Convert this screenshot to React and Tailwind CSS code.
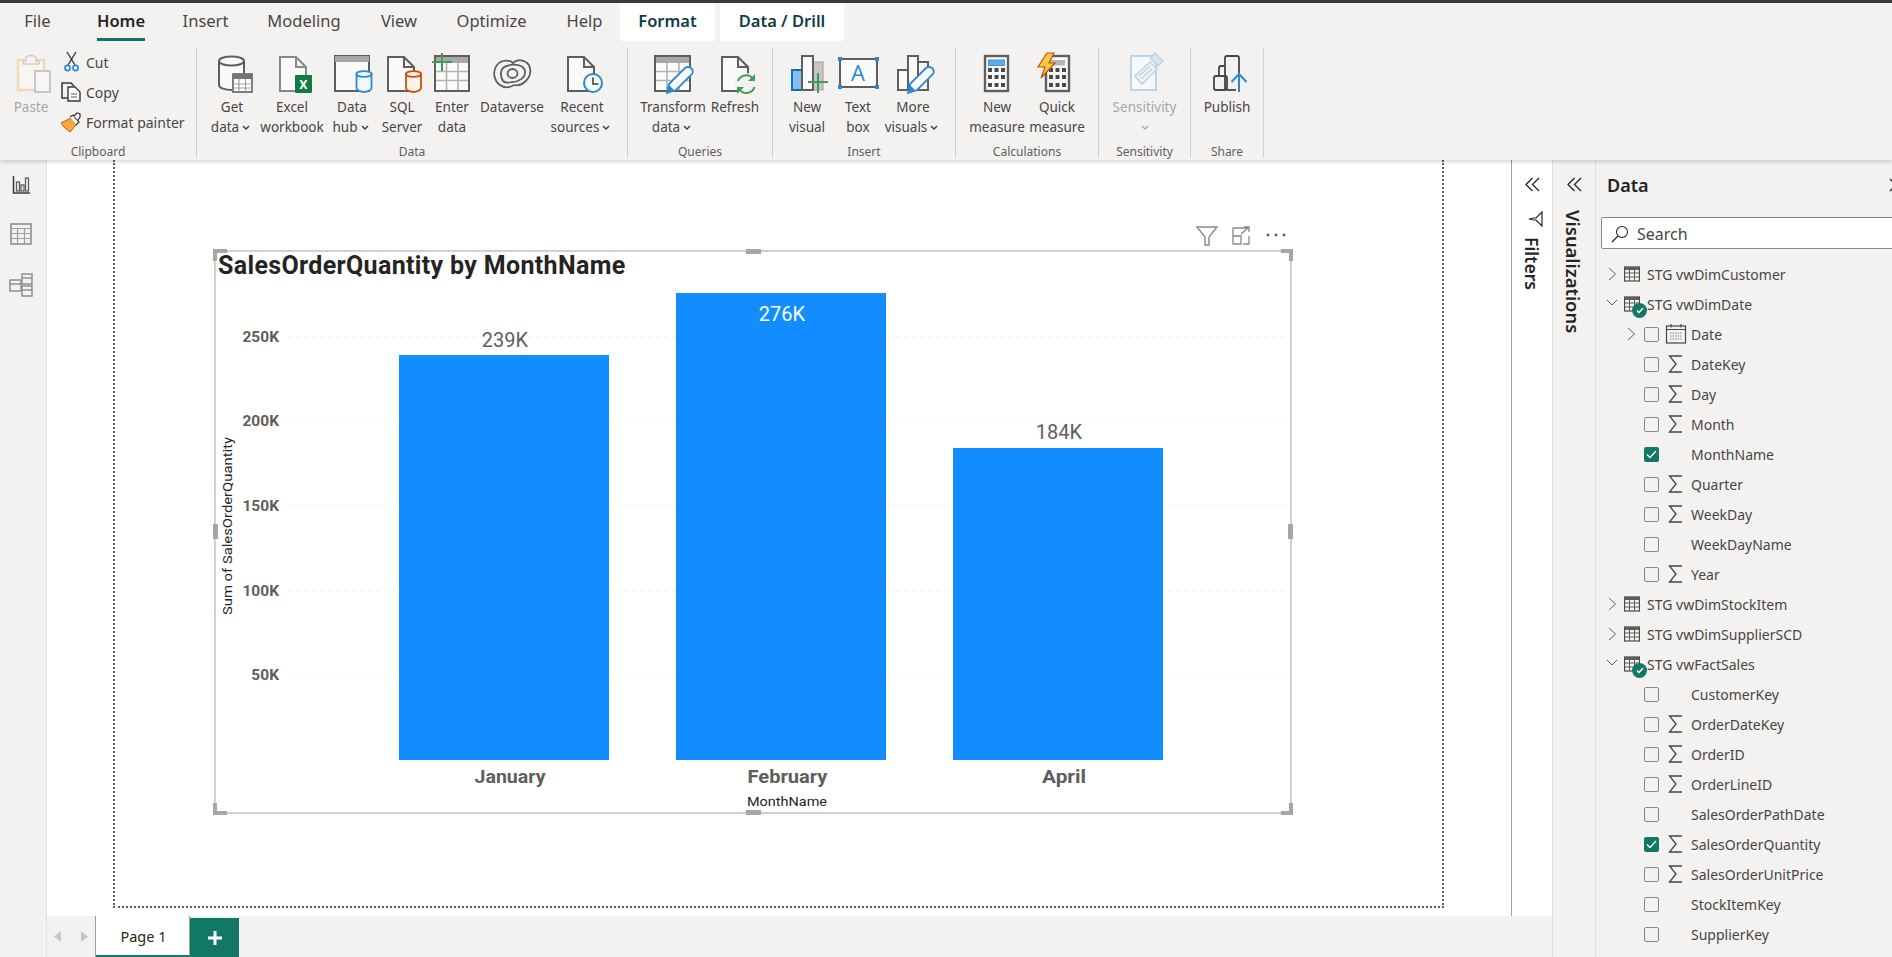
const GRAY = '#605e5c';
const BLUE = '#2b88d8';
const GREEN = '#3f9c57';

// icons below are drawn in page pixels: the viewBox is the spot they sit on
function Cylinder({ cx, color, fill }) {
    return (
        <g stroke={color} strokeWidth="1.8" fill={fill}>
            <path d={`M${cx - 7.5} 74 V88 C${cx - 7.5} 90.5 ${cx - 3} 92 ${cx} 92 C${cx + 3} 92 ${cx + 7.5} 90.5 ${cx + 7.5} 88 V74 Z`} />
            <ellipse cx={cx} cy="74" rx="7.5" ry="2.8" />
        </g>
    );
}

function Page({ x, stroke = GRAY }) {
    return (
        <path d={`M${x} 57 H${x + 16} L${x + 26} 67 V91 H${x} Z M${x + 16} 57 V67 H${x + 26}`} stroke={stroke} strokeWidth="2" fill="#fafafa" />
    );
}

function Pencil({ dx = 0 }) {
    return (
        <g transform={`translate(${dx} 0)`}>
            <path d="M667 93 L669 84 L685 68 Q688 66 691 68 Q694 71 692 74 L676 90 Z" stroke={BLUE} strokeWidth="1.8" fill="#fff" />
            <path d="M667 93 L669 85 L675 91 Z" fill={BLUE} />
        </g>
    );
}

function TableGrid({ x, w, cols, rows, withPlus }) {
    return (
        <g>
            <rect x={x} y="56" width={w} height="35" fill="#fafafa" />
            <rect x={x} y="56" width={w} height="7" fill="#a8a8a8" />
            {cols.map(c => <path key={c} d={`M${c} 63 V90`} stroke="#b5b3b1" strokeWidth="1.6" />)}
            {rows.map(r => <path key={r} d={`M${x} ${r} H${x + w}`} stroke="#b5b3b1" strokeWidth="1.6" />)}
            <rect x={x} y="56" width={w} height="35" fill="none" stroke={GRAY} strokeWidth="2" />
            {withPlus && <path d="M432 62 H452 M442 53 V71" stroke={GREEN} strokeWidth="2" />}
        </g>
    );
}

function CalcKeys({ xs }) {
    return (
        <g fill="#4a4846">
            {[70, 77, 85].map(y => xs.map(x => <rect key={`${x}-${y}`} x={x - 2} y={y - 2} width="4" height="4" />))}
        </g>
    );
}

const ICONS = {
    paste: (
        <g>
            <rect x="18" y="60" width="26" height="30" fill="#f8f6f3" stroke="#f2d8bb" strokeWidth="2.4" />
            <path d="M26 61 V57 Q31 54 36 57 V61 H39 V64 H23 V61 Z" fill="#f4f3f2" stroke="#cfcdcb" strokeWidth="1.4" />
            <rect x="35" y="71" width="15" height="21" fill="#f6f6f6" stroke="#c8c6c4" strokeWidth="2" />
        </g>
    ),
    getData: (
        <g>
            <path d="M219 61 V85 C219 88 225 90 232 90 V73 H244 V61 Z" fill="#fafafa" />
            <path d="M219 61 V85 C219 88 225 90 232 90 M244 61 V73" stroke={GRAY} strokeWidth="2" fill="none" />
            <ellipse cx="231.5" cy="61" rx="12.5" ry="4.6" fill="#fafafa" stroke={GRAY} strokeWidth="2" />
            <rect x="233" y="74" width="19" height="18" fill="#fff" stroke={GRAY} strokeWidth="1.6" />
            <rect x="233" y="74" width="19" height="5" fill="#767472" />
            <path d="M239 79 V92 M245.5 79 V92 M233 84 H252 M233 88 H252" stroke="#a19f9d" strokeWidth="1.2" />
        </g>
    ),
    excel: (
        <g>
            <Page x={280} stroke="#8a8886" />
            <rect x="295" y="75" width="17" height="18" rx="1" fill="#107c41" />
            <text x="303.5" y="89" textAnchor="middle" fill="#fff" fontSize="13" fontWeight="700" fontFamily="Roboto">X</text>
        </g>
    ),
    dataHub: (
        <g>
            <rect x="335" y="56" width="34" height="35" fill="#fafafa" stroke={GRAY} strokeWidth="2" />
            <rect x="335" y="56" width="34" height="6" fill="#a8a8a8" />
            <Cylinder cx={364} color={BLUE} fill="#f2f8fc" />
        </g>
    ),
    sql: (
        <g>
            <Page x={388} />
            <Cylinder cx={413.5} color="#ca5010" fill="#fdf3ea" />
        </g>
    ),
    enter: <TableGrid x={435} w={34} cols={[446.5, 458]} rows={[71.5, 80.5]} withPlus />,
    dataverse: (
        <g stroke={GRAY} strokeWidth="1.8" fill="none">
            <path d="M500 85 C494 81 492 71 497 65 C502 59 510 60 513 63 C518 58 528 60 530 68 C532 78 522 87 514 85 C509 88 504 88 500 85 Z" />
            <path d="M503 81 C499 74 501 67 507 66 C514 63 524 65 525 71 C526 78 518 82 512 82 C508 83 505 83 503 81 Z" />
            <ellipse cx="512.5" cy="73.5" rx="5" ry="4.5" />
        </g>
    ),
    recent: (
        <g>
            <Page x={568} />
            <circle cx="593" cy="83" r="9" fill="#f5fafd" stroke={BLUE} strokeWidth="2" />
            <path d="M593 77.5 V84 H598.5" stroke="#3b3a39" strokeWidth="1.6" fill="none" />
        </g>
    ),
    transform: (
        <g>
            <TableGrid x={655} w={35} cols={[667, 679]} rows={[71.5, 80.5]} />
            <Pencil />
        </g>
    ),
    refresh: (
        <g>
            <Page x={722} />
            <circle cx="746" cy="84" r="11" fill="#f3f2f1" />
            <path d="M738 81 A8.5 8.5 0 0 1 753 79 M754.5 87 A8.5 8.5 0 0 1 739.5 89.5" stroke={GREEN} strokeWidth="2" fill="none" />
            <path d="M755 74 V81 H748 Z M737 94 V87 H744 Z" fill={GREEN} />
        </g>
    ),
    newVisual: (
        <g>
            <rect x="813" y="62" width="10" height="28" fill="#c8c6c4" stroke="#a19f9d" strokeWidth="1" />
            <rect x="792" y="70" width="10" height="20" fill="#83beec" stroke="#106ebe" strokeWidth="2" />
            <rect x="802" y="56" width="11" height="34" fill="#fafafa" stroke={GRAY} strokeWidth="2" />
            <path d="M808 82 H828 M818 73 V93" stroke={GREEN} strokeWidth="2" />
        </g>
    ),
    textBox: (
        <g>
            <rect x="840" y="59" width="37" height="28" fill="#fafafa" stroke={GRAY} strokeWidth="2" />
            {[[838, 57], [875, 57], [838, 85], [875, 85]].map(([x, y]) => <rect key={x + '-' + y} x={x} y={y} width="4" height="4" fill={BLUE} />)}
            <text x="858" y="81" textAnchor="middle" fill={BLUE} fontSize="22" fontFamily="Open Sans">A</text>
        </g>
    ),
    moreVisuals: (
        <g>
            <path d="M918 62 H928 V90 H918 Z M898 70 H908 V90 H898 Z" fill="#fafafa" stroke={GRAY} strokeWidth="2" />
            <rect x="908" y="56" width="10" height="34" fill="#fafafa" stroke={GRAY} strokeWidth="2" />
            <Pencil dx={241} />
        </g>
    ),
    newMeasure: (
        <g>
            <rect x="985" y="56" width="23" height="35" fill="#fafafa" stroke={GRAY} strokeWidth="2.4" />
            <rect x="988.5" y="60" width="16" height="5.5" fill="#5ea9e6" stroke={BLUE} strokeWidth="0.8" />
            <CalcKeys xs={[990, 996.5, 1003]} />
        </g>
    ),
    quickMeasure: (
        <g>
            <rect x="1046" y="56" width="23" height="35" fill="#fafafa" stroke={GRAY} strokeWidth="2.4" />
            <rect x="1050" y="60" width="15" height="5.5" fill="#b5b3b1" />
            <CalcKeys xs={[1051, 1057.5, 1064]} />
            <path d="M1047 53 H1054 L1049 63 H1055 L1041 78 L1045 67 H1038 Z" fill="#ffc83d" stroke="#ca5010" strokeWidth="1.2" />
        </g>
    ),
    sensitivity: (
        <g>
            <rect x="1131" y="56" width="25" height="34" fill="#f6f8f9" stroke="#b9d6e9" strokeWidth="2" />
            <path d="M1135 76 L1150 62 L1157 69 L1142 84 Z" fill="#f3f2f1" stroke="#b9d6e9" strokeWidth="1.6" />
            <path d="M1139 76 L1150 66 M1141 79 L1152 69" stroke="#b9d6e9" strokeWidth="1.4" />
            <path d="M1150 58 L1155 53 L1163 61 L1158 66 Z" fill="#d3e6f2" stroke="#b9d6e9" strokeWidth="1.4" />
        </g>
    ),
    publish: (
        <g fill="none">
            <path d="M1219 76 V68 Q1219 66 1221 66 H1225 M1225 90 V58 Q1225 56 1227 56 H1237 Q1239 56 1239 58 V73" stroke="#484644" strokeWidth="1.8" />
            <rect x="1214" y="76" width="13" height="14" rx="2" stroke="#484644" strokeWidth="1.8" />
            <path d="M1227 90 H1236" stroke="#484644" strokeWidth="1.8" />
            <path d="M1239 92 V74 M1231.5 82 L1239 74 L1246.5 82" stroke={BLUE} strokeWidth="2" />
        </g>
    ),
};

function Caret({ color = '#3b3a39' }) {
    return (
        <svg width="8" height="5" viewBox="0 0 8 5" className="inline-block ml-[3px] mb-[1px]">
            <path d="M1 1 L4 4 L7 1" stroke={color} strokeWidth="1.4" fill="none" />
        </svg>
    );
}

// big ribbon button: x is the page position of its left edge
function RibbonButton({ x, w, icon, lines, caret, muted }) {
    return (
        <div className="flex flex-col items-center shrink-0" style={{ width: w }}>
            <svg width={w} height="42" viewBox={`${x} 55 ${w} 42`} className="overflow-visible shrink-0">{ICONS[icon]}</svg>
            <div className={`text-center leading-[20px] whitespace-nowrap text-[13.5px] ${muted ? 'text-[#a8a6a4]' : 'text-[#484644]'}`}>
                {lines.map((l, i) => (
                    <div key={i} className={caret && i === lines.length - 1 ? '-ml-[3px]' : ''}>{l}{caret && i === lines.length - 1 && <Caret />}</div>
                ))}
            </div>
        </div>
    );
}

function RibbonGroup({ width, pad, label, children }) {
    return (
        <div className="relative flex flex-col h-[110px] pt-[7px] border-r border-[#d2d0ce] shrink-0" style={{ width, paddingLeft: pad }}>
            <div className="flex flex-1">{children}</div>
            <div className="absolute left-0 right-0 bottom-[-2px] text-center text-[12px] leading-[16px] text-[#605e5c]">{label}</div>
        </div>
    );
}

function Ribbon() {
    return (
        <div className="relative z-10 h-[119px] pt-[7px] flex bg-[#f3f2f1] shadow-[0_2px_4px_rgba(0,0,0,0.16)] shrink-0">
            <RibbonGroup width={197} pad={12} label="Clipboard">
                <RibbonButton x={12} w={38} icon="paste" lines={['Paste']} muted />
                <div className="flex flex-col ml-[11px] mt-[-8px] text-[14px] text-[#484644]">
                    <div className="flex items-center h-[30px]">
                        <svg width="20" height="22" viewBox="61 52 20 22" className="mr-[5px]">
                            <path d="M67 53 L75 66 M76 53 L68 66" stroke="#3b3a39" strokeWidth="1.4" />
                            <circle cx="67.5" cy="69" r="2.6" fill="none" stroke={BLUE} strokeWidth="1.6" />
                            <circle cx="75.5" cy="69" r="2.6" fill="none" stroke={BLUE} strokeWidth="1.6" />
                        </svg>
                        Cut
                    </div>
                    <div className="flex items-center h-[30px]">
                        <svg width="20" height="20" viewBox="61 83 20 20" className="mr-[5px]">
                            <path d="M68 99 H62 V84 H71 L74 87" stroke="#3b3a39" strokeWidth="1.5" fill="none" />
                            <path d="M68 88 H75 L80 93 V102 H68 Z" stroke="#3b3a39" strokeWidth="1.4" fill="#fafafa" />
                            <path d="M71 95 H77 M71 98 H77" stroke={GRAY} strokeWidth="1" />
                        </svg>
                        Copy
                    </div>
                    <div className="flex items-center h-[30px]">
                        <svg width="20" height="20" viewBox="61 112 20 20" className="mr-[5px]">
                            <path d="M61 123 L71 118 L76 125 L70 132 Q64 128 61 123 Z" fill="#f7a93b" stroke="#ca5010" strokeWidth="1" />
                            <path d="M70 117 L73 115 L79 122 L76 125" fill="#fff" stroke="#3b3a39" strokeWidth="1.3" />
                            <path d="M74 116 L77 113 L80 114 L80 117 L78 120" fill="#fff" stroke="#3b3a39" strokeWidth="1.3" />
                        </svg>
                        Format painter
                    </div>
                </div>
            </RibbonGroup>
            <RibbonGroup width={431} pad={10} label="Data">
                <RibbonButton x={207} w={50} icon="getData" lines={['Get', 'data']} caret />
                <RibbonButton x={257} w={70} icon="excel" lines={['Excel', 'workbook']} />
                <RibbonButton x={327} w={50} icon="dataHub" lines={['Data', 'hub']} caret />
                <RibbonButton x={377} w={50} icon="sql" lines={['SQL', 'Server']} />
                <RibbonButton x={427} w={50} icon="enter" lines={['Enter', 'data']} />
                <RibbonButton x={477} w={70} icon="dataverse" lines={['Dataverse']} />
                <RibbonButton x={547} w={70} icon="recent" lines={['Recent', 'sources']} caret />
            </RibbonGroup>
            <RibbonGroup width={145} pad={10} label="Queries">
                <RibbonButton x={638} w={70} icon="transform" lines={['Transform', 'data']} caret />
                <RibbonButton x={708} w={54} icon="refresh" lines={['Refresh']} />
            </RibbonGroup>
            <RibbonGroup width={183} pad={9} label="Insert">
                <RibbonButton x={782} w={50} icon="newVisual" lines={['New', 'visual']} />
                <RibbonButton x={832} w={52} icon="textBox" lines={['Text', 'box']} />
                <RibbonButton x={884} w={58} icon="moreVisuals" lines={['More', 'visuals']} caret />
            </RibbonGroup>
            <RibbonGroup width={143} pad={11} label="Calculations">
                <RibbonButton x={967} w={60} icon="newMeasure" lines={['New', 'measure']} />
                <RibbonButton x={1027} w={60} icon="quickMeasure" lines={['Quick', 'measure']} />
            </RibbonGroup>
            <RibbonGroup width={92} pad={0} label="Sensitivity">
                <div className="flex flex-col items-center">
                    <RibbonButton x={1099} w={91} icon="sensitivity" lines={['Sensitivity']} muted />
                    <div className="flex h-[5px] mt-[8px] mr-[3px]"><Caret color="#a8a6a4" /></div>
                </div>
            </RibbonGroup>
            <RibbonGroup width={73} pad={0} label="Share">
                <RibbonButton x={1191} w={72} icon="publish" lines={['Publish']} />
            </RibbonGroup>
        </div>
    );
}

function TabRow() {
    const tabs = [
        ['File', 75], ['Home', 92], ['Insert', 77], ['Modeling', 120],
        ['View', 70], ['Optimize', 115], ['Help', 71],
    ];
    return (
        <div className="h-[38px] flex bg-[#f3f2f1] text-[16.5px] text-[#484644] shrink-0">
            {tabs.map(([name, w]) => (
                <div key={name} className={`relative flex items-center justify-center pb-[2px] ${name === 'Home' ? 'font-semibold text-[#252423]' : ''}`} style={{ width: w }}>
                    {name}
                    {name === 'Home' && <div className="absolute bottom-0 left-[22px] w-[48px] h-[3px] bg-[#117865]" />}
                </div>
            ))}
            <div className="w-[95px] flex items-center justify-center pb-[2px] bg-white font-semibold text-[#0f3d44]">Format</div>
            <div className="w-[124px] ml-[5px] flex items-center justify-center pb-[2px] bg-white font-semibold text-[#0f3d44]">Data / Drill</div>
        </div>
    );
}

function LeftRail() {
    return (
        <div className="w-[47px] shrink-0 border-r border-[#e1dfdd] bg-[#f3f2f1] flex flex-col items-center pt-[15px] gap-[20px] pr-[4px]">
            <svg width="20" height="20" viewBox="0 0 20 20">
                <path d="M2.5 1 V18 H19" stroke="#3b3a39" strokeWidth="1.5" fill="none" />
                <rect x="5.5" y="7" width="3" height="9" fill="none" stroke="#605e5c" strokeWidth="1.3" />
                <rect x="10" y="10" width="3" height="6" fill="none" stroke="#605e5c" strokeWidth="1.3" />
                <rect x="14.5" y="3" width="3" height="13" fill="none" stroke="#605e5c" strokeWidth="1.3" />
            </svg>
            <svg width="22" height="22" viewBox="0 0 22 22" className="mt-[8px]">
                <rect x="1" y="1" width="20" height="20" fill="none" stroke="#8a8886" strokeWidth="1.5" />
                <path d="M1 5.5 H21 M1 10.5 H21 M1 15.5 H21 M7.5 5.5 V21 M14.5 5.5 V21" stroke="#a19f9d" strokeWidth="1.2" />
            </svg>
            <svg width="24" height="24" viewBox="0 0 24 24" className="mt-[8px]">
                <g fill="none" stroke="#8a8886" strokeWidth="1.4">
                    <rect x="1" y="7" width="11" height="11" />
                    <path d="M1 11 H12" />
                    <rect x="13" y="1" width="10" height="10" />
                    <path d="M13 5 H23" />
                    <rect x="13" y="13" width="10" height="10" />
                    <path d="M13 17 H23" />
                </g>
            </svg>
        </div>
    );
}

function Chart() {
    const ticks = [['250K', 337], ['200K', 421], ['150K', 506], ['100K', 591], ['50K', 675]];
    const bars = [[398, 355, 405], [675, 293, 467], [952, 448, 312]];
    const labels = { fontFamily: 'Roboto', fill: GRAY };
    return (
        <svg width="1076" height="530" viewBox="215 282 1076 530" className="block">
            {ticks.map(([t, y]) => (
                <g key={t}>
                    <path d={`M288 ${y} H1284`} stroke="#d2d0ce" strokeWidth="1" strokeDasharray="1 7" />
                    <text x="278" y={y + 5} textAnchor="end" fontSize="15.5" fontWeight="700" {...labels}>{t}</text>
                </g>
            ))}
            {bars.map(([x, y, h]) => <rect key={x} x={x} y={y} width="210" height={h} fill="#118dff" />)}
            <text x="504" y="347" textAnchor="middle" fontSize="20" {...labels}>239K</text>
            <text x="781" y="321" textAnchor="middle" fontSize="20" fontFamily="Roboto" fill="#fff">276K</text>
            <text x="1058" y="439" textAnchor="middle" fontSize="20" {...labels}>184K</text>
            <text x="509" y="783" textAnchor="middle" fontSize="18" fontWeight="700" {...labels} textLength="71" lengthAdjust="spacingAndGlyphs">January</text>
            <text x="786.5" y="783" textAnchor="middle" fontSize="18" fontWeight="700" {...labels} textLength="80" lengthAdjust="spacingAndGlyphs">February</text>
            <text x="1063" y="783" textAnchor="middle" fontSize="18" fontWeight="700" {...labels} textLength="44" lengthAdjust="spacingAndGlyphs">April</text>
            <text x="786" y="806" textAnchor="middle" fontSize="13.5" fontFamily="Roboto" fill="#252423" textLength="80" lengthAdjust="spacingAndGlyphs">MonthName</text>
            <text transform="translate(231 526) rotate(-90)" textAnchor="middle" fontSize="13.5" fontFamily="Roboto" fill="#252423" textLength="178" lengthAdjust="spacingAndGlyphs">Sum of SalesOrderQuantity</text>
        </svg>
    );
}

function Visual() {
    return (
        <div className="relative ml-[99px] w-[1078px] h-[564px] border-2 border-[#d2d0ce]">
            <div className="h-[30px] pl-[2px] leading-[28px] text-[25px] font-bold text-[#252423] font-['Roboto'] tracking-[0.34px] whitespace-nowrap">
                SalesOrderQuantity by MonthName
            </div>
            <Chart />
            {/* visual header */}
            <svg width="100" height="22" viewBox="1195 224 100 22" className="absolute right-[-5px] top-[-28px]">
                <path d="M1197 227 H1217 L1209 237 V245 H1205 V237 Z" fill="none" stroke="#8a8886" strokeWidth="1.4" />
                <path d="M1233 236 V228 H1248 M1233 236 H1241 V244 H1233 Z M1249 236 V244 H1243 M1241 234 L1249 227 M1244 227 H1249 V232" fill="none" stroke="#8a8886" strokeWidth="1.3" />
                <circle cx="1268" cy="235" r="1.4" fill={GRAY} />
                <circle cx="1276" cy="235" r="1.4" fill={GRAY} />
                <circle cx="1284" cy="235" r="1.4" fill={GRAY} />
            </svg>
            {/* resize handles */}
            <div className="absolute left-[-3px] top-[-3px] w-[14px] h-[12px] border-t-[4px] border-l-[4px] border-[#a6a6a6]" />
            <div className="absolute right-[-3px] top-[-3px] w-[12px] h-[12px] border-t-[4px] border-r-[4px] border-[#a6a6a6]" />
            <div className="absolute left-[-3px] bottom-[-3px] w-[14px] h-[12px] border-b-[4px] border-l-[4px] border-[#a6a6a6]" />
            <div className="absolute right-[-3px] bottom-[-3px] w-[12px] h-[12px] border-b-[4px] border-r-[4px] border-[#a6a6a6]" />
            <div className="absolute left-[530px] top-[-3px] w-[15px] h-[5px] bg-[#a6a6a6]" />
            <div className="absolute left-[530px] bottom-[-3px] w-[15px] h-[5px] bg-[#a6a6a6]" />
            <div className="absolute left-[-3px] top-[272px] w-[5px] h-[15px] bg-[#a6a6a6]" />
            <div className="absolute right-[-3px] top-[272px] w-[5px] h-[15px] bg-[#a6a6a6]" />
        </div>
    );
}

function DoubleChevron() {
    return (
        <svg width="15" height="15" viewBox="0 0 15 15">
            <path d="M7.5 1 L1 7.5 L7.5 14 M14 1 L7.5 7.5 L14 14" fill="none" stroke="#252423" strokeWidth="1.3" />
        </svg>
    );
}

function FiltersPane() {
    return (
        <div className="w-[41px] shrink-0 border-l border-[#a19f9d] bg-white flex flex-col items-center pt-[17px]">
            <DoubleChevron />
            <svg width="15" height="16" viewBox="0 0 15 16" className="mt-[19px] ml-[6px]">
                <path d="M14 1 V15 L8 9 H5.5 L1 8 L5.5 7 H8 Z" fill="none" stroke="#252423" strokeWidth="1.2" />
            </svg>
            <div className="[writing-mode:vertical-rl] mt-[10px] text-[17.5px] leading-[20px] font-semibold text-[#252423]">Filters</div>
        </div>
    );
}

function VizPane() {
    return (
        <div className="w-[44px] shrink-0 border-l border-r border-[#e1dfdd] bg-[#f3f2f1] flex flex-col items-center pt-[17px]">
            <DoubleChevron />
            <div className="[writing-mode:vertical-rl] mt-[18px] mr-[2px] text-[18.4px] leading-[22px] font-semibold text-[#252423]">Visualizations</div>
        </div>
    );
}

function Chevron({ open }) {
    return (
        <svg width="9" height="14" viewBox="0 0 9 14" className="overflow-visible">
            {open
                ? <path d="M-1 4 L4 9 L9 4" fill="none" stroke="#605e5c" strokeWidth="1" transform="translate(0 -1)" />
                : <path d="M1 1 L7.5 7 L1 13" fill="none" stroke="#605e5c" strokeWidth="1" />}
        </svg>
    );
}

function TableIcon() {
    return (
        <svg width="16" height="16" viewBox="0 0 16 16">
            <rect x="0.5" y="1" width="15" height="14" fill="none" stroke="#484644" strokeWidth="1.2" />
            <rect x="0.5" y="1" width="15" height="3" fill="#605e5c" />
            <path d="M1 7 H15 M1 11 H15 M5.5 4 V15 M10.5 4 V15" stroke="#605e5c" strokeWidth="1" />
        </svg>
    );
}

function Sigma() {
    return (
        <svg width="15" height="18" viewBox="0 0 15 18" className="overflow-visible">
            <path d="M14 1 H1.5 L8 9 L1.5 17 H14" fill="none" stroke="#484644" strokeWidth="1.3" />
        </svg>
    );
}

function CalendarIcon() {
    return (
        <svg width="20" height="20" viewBox="0 0 20 20" className="overflow-visible shrink-0">
            <rect x="0.5" y="2" width="19" height="17" fill="none" stroke="#484644" strokeWidth="1.2" />
            <path d="M0.5 5.5 H19.5 M5 0 V3.5 M15 0 V3.5" stroke="#484644" strokeWidth="1.2" />
            <path d="M4 9 H16 M4 12 H16 M4 15 H16" stroke="#8a8886" strokeWidth="1.2" strokeDasharray="1.5 1" />
        </svg>
    );
}

function TableRow({ name, open, used }) {
    return (
        <div className="flex items-center h-[30px] pl-[12px] text-[#484644]">
            <div className="w-[9px]"><Chevron open={open} /></div>
            <div className="relative ml-[7px] w-[16px] h-[16px]">
                <TableIcon />
                {used && (
                    <div className="absolute left-[8px] top-[7px] w-[15px] h-[15px] rounded-full bg-[#117865] flex items-center justify-center">
                        <svg width="8" height="7" viewBox="0 0 8 7"><path d="M1 3.5 L3 5.5 L7 1" stroke="#fff" strokeWidth="1.5" fill="none" /></svg>
                    </div>
                )}
            </div>
            <span className="ml-[7px]">{name}</span>
        </div>
    );
}

function FieldRow({ name, kind, checked, expandable }) {
    return (
        <div className="flex items-center h-[30px] pl-[31px] text-[#484644]">
            <div className="w-[9px]">{expandable && <Chevron />}</div>
            {checked ? (
                <div className="ml-[8px] w-[15px] h-[15px] rounded-[2px] bg-[#117865] flex items-center justify-center">
                    <svg width="11" height="9" viewBox="0 0 11 9"><path d="M1 4.5 L4 7.5 L10 1" stroke="#fff" strokeWidth="1.3" fill="none" /></svg>
                </div>
            ) : (
                <div className="ml-[8px] w-[15px] h-[15px] rounded-[2px] border border-[#8a8886]" />
            )}
            <div className="ml-[9px] w-[15px] flex justify-center">
                {kind === 'sum' && <Sigma />}
                {kind === 'date' && <CalendarIcon />}
            </div>
            <span className="ml-[8px]">{name}</span>
        </div>
    );
}

const FIELDS = [
    { t: 1, name: 'STG vwDimCustomer' },
    { t: 1, name: 'STG vwDimDate', open: true, used: true },
    { name: 'Date', kind: 'date', expandable: true },
    { name: 'DateKey', kind: 'sum' },
    { name: 'Day', kind: 'sum' },
    { name: 'Month', kind: 'sum' },
    { name: 'MonthName', checked: true },
    { name: 'Quarter', kind: 'sum' },
    { name: 'WeekDay', kind: 'sum' },
    { name: 'WeekDayName' },
    { name: 'Year', kind: 'sum' },
    { t: 1, name: 'STG vwDimStockItem' },
    { t: 1, name: 'STG vwDimSupplierSCD' },
    { t: 1, name: 'STG vwFactSales', open: true, used: true },
    { name: 'CustomerKey' },
    { name: 'OrderDateKey', kind: 'sum' },
    { name: 'OrderID', kind: 'sum' },
    { name: 'OrderLineID', kind: 'sum' },
    { name: 'SalesOrderPathDate' },
    { name: 'SalesOrderQuantity', kind: 'sum', checked: true },
    { name: 'SalesOrderUnitPrice', kind: 'sum' },
    { name: 'StockItemKey' },
    { name: 'SupplierKey' },
];

function DataPane() {
    return (
        <div className="w-[296px] shrink-0 bg-[#f3f2f1] overflow-hidden text-[14px]">
            <div className="h-[50px] pl-[11px] flex items-center justify-between">
                <span className="text-[18px] font-semibold text-[#252423]">Data</span>
                <svg width="12" height="14" viewBox="0 0 12 14" className="mr-[-9px]"><path d="M1 1 L7 7 L1 13" fill="none" stroke="#252423" strokeWidth="1.3" /></svg>
            </div>
            <div className="ml-[5px] mt-[7px] w-[320px] h-[32px] flex items-center bg-white border border-[#8a8886] rounded-[2px] pl-[9px] pt-[1px] text-[16px] text-[#484644]">
                <svg width="18" height="18" viewBox="0 0 18 18" className="shrink-0">
                    <circle cx="11" cy="7" r="5.5" fill="none" stroke="#252423" strokeWidth="1.1" />
                    <path d="M7 11 L1 17" stroke="#252423" strokeWidth="1.2" />
                </svg>
                <span className="ml-[8px]">Search</span>
            </div>
            <div className="mt-[10px]">
                {FIELDS.map(f => f.t
                    ? <TableRow key={f.name} {...f} />
                    : <FieldRow key={f.name} {...f} />)}
            </div>
        </div>
    );
}

function PageTabs() {
    return (
        <div className="h-[41px] flex bg-[#f3f2f1] shrink-0">
            <div className="w-[49px] flex items-center justify-center gap-[20px] border-r border-[#a19f9d]">
                <svg width="7" height="11" viewBox="0 0 7 11"><path d="M7 0 V11 L0 5.5 Z" fill="#c8c6c4" /></svg>
                <svg width="7" height="11" viewBox="0 0 7 11"><path d="M0 0 V11 L7 5.5 Z" fill="#c8c6c4" /></svg>
            </div>
            <div className="w-[94px] bg-white border-r border-[#a19f9d] border-b-2 border-b-[#117865] flex items-center justify-center pt-[3px] pl-[2px] text-[14.5px] text-[#252423]">Page 1</div>
            <div className="w-[49px] mt-[2px] bg-[#117865] flex items-center justify-center">
                <svg width="14" height="14" viewBox="0 0 14 14"><path d="M7 0 V14 M0 7 H14" stroke="#fff" strokeWidth="3" /></svg>
            </div>
        </div>
    );
}

export default function App() {
    return (
        <div className="w-[1892px] h-[957px] flex flex-col overflow-hidden bg-white font-['Noto_Sans',sans-serif]">
            <div className="h-[3px] bg-[#3b3a39] shrink-0" />
            <TabRow />
            <Ribbon />
            <div className="flex flex-1 min-h-0">
                <LeftRail />
                <div className="flex flex-col w-[1505px] shrink-0">
                    <div className="flex flex-1 min-h-0">
                        <div className="flex-1 bg-white overflow-hidden">
                            <div className="ml-[66px] w-[1331px] h-[748px] pt-[90px] border-x-2 border-b-2 border-dotted border-[#605e5c]">
                                <Visual />
                            </div>
                        </div>
                        <FiltersPane />
                    </div>
                    <PageTabs />
                </div>
                <VizPane />
                <DataPane />
            </div>
        </div>
    );
}
